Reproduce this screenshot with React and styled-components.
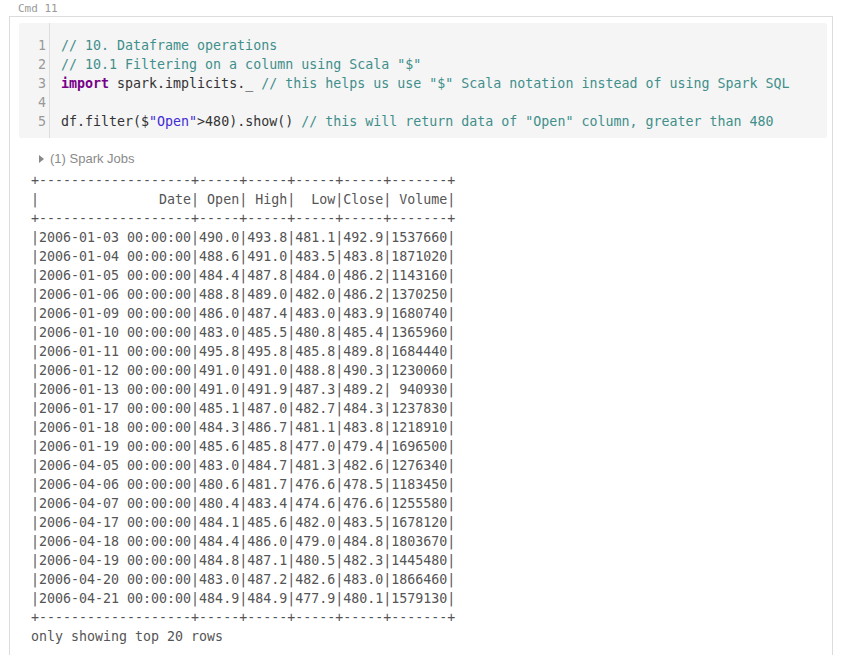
import React from 'react';
import styled, { createGlobalStyle } from 'styled-components';

const GlobalStyle = createGlobalStyle`
  html, body {
    margin: 0;
    padding: 0;
    background: #fff;
  }
  body {
    font-family: 'DejaVu Sans Mono', monospace;
  }
`;

const MONO = `'DejaVu Sans Mono', 'Liberation Mono', monospace`;

const Page = styled.div`
  padding: 2px 0 0 9px;
  width: 824px;
`;

const CmdLabel = styled.div`
  font-family: ${MONO};
  font-size: 11px;
  line-height: 14px;
  color: #9a9a9a;
  padding-left: 9px;
`;

const Cell = styled.div`
  border: 1px solid #dcdcdc;
  border-bottom: none;
  padding: 6px 5px 10px 9px;
  height: 640px;
  box-sizing: border-box;
`;

const CodeBlock = styled.div`
  display: flex;
  background: #f5f5f5;
  border-radius: 2px;
  font-family: ${MONO};
  font-size: 13.3px;
  line-height: 19px;
  color: #333;
`;

const Gutter = styled.div`
  width: 27px;
  padding: 13px 3px 7px 0;
  border-right: 1px solid #dddddd;
  text-align: right;
  color: #999;
`;

const Lines = styled.pre`
  margin: 0;
  padding: 13px 0 7px 11px;
  font: inherit;
  white-space: pre;
`;

const Comment = styled.span`
  color: #3f8f8b;
`;

const Keyword = styled.span`
  color: #770088;
  font-weight: bold;
`;

const Str = styled.span`
  color: #3f2bd6;
`;

const Output = styled.div`
  padding: 11px 0 0 12px;
`;

const Jobs = styled.div`
  display: flex;
  align-items: center;
  gap: 6px;
  padding-left: 8px;
  font-family: 'Liberation Sans', Arial, sans-serif;
  font-size: 13px;
  line-height: 19px;
  color: #8a8a8a;
`;

const Caret = styled.span`
  width: 0;
  height: 0;
  border-top: 4px solid transparent;
  border-bottom: 4px solid transparent;
  border-left: 5px solid #888;
`;

const Table = styled.pre`
  margin: 3px 0 0;
  font-family: ${MONO};
  font-size: 13.3px;
  line-height: 19px;
  color: #555;
`;

const rows = [
  ['2006-01-03', '490.0', '493.8', '481.1', '492.9', '1537660'],
  ['2006-01-04', '488.6', '491.0', '483.5', '483.8', '1871020'],
  ['2006-01-05', '484.4', '487.8', '484.0', '486.2', '1143160'],
  ['2006-01-06', '488.8', '489.0', '482.0', '486.2', '1370250'],
  ['2006-01-09', '486.0', '487.4', '483.0', '483.9', '1680740'],
  ['2006-01-10', '483.0', '485.5', '480.8', '485.4', '1365960'],
  ['2006-01-11', '495.8', '495.8', '485.8', '489.8', '1684440'],
  ['2006-01-12', '491.0', '491.0', '488.8', '490.3', '1230060'],
  ['2006-01-13', '491.0', '491.9', '487.3', '489.2', ' 940930'],
  ['2006-01-17', '485.1', '487.0', '482.7', '484.3', '1237830'],
  ['2006-01-18', '484.3', '486.7', '481.1', '483.8', '1218910'],
  ['2006-01-19', '485.6', '485.8', '477.0', '479.4', '1696500'],
  ['2006-04-05', '483.0', '484.7', '481.3', '482.6', '1276340'],
  ['2006-04-06', '480.6', '481.7', '476.6', '478.5', '1183450'],
  ['2006-04-07', '480.4', '483.4', '474.6', '476.6', '1255580'],
  ['2006-04-17', '484.1', '485.6', '482.0', '483.5', '1678120'],
  ['2006-04-18', '484.4', '486.0', '479.0', '484.8', '1803670'],
  ['2006-04-19', '484.8', '487.1', '480.5', '482.3', '1445480'],
  ['2006-04-20', '483.0', '487.2', '482.6', '483.0', '1866460'],
  ['2006-04-21', '484.9', '484.9', '477.9', '480.1', '1579130'],
];

const sep = '+-------------------+-----+-----+-----+-----+-------+';
const header = '|               Date| Open| High|  Low|Close| Volume|';

const tableText = [
  sep,
  header,
  sep,
  ...rows.map(
    ([d, o, h, l, c, v]) => `|${d} 00:00:00|${o}|${h}|${l}|${c}|${v}|`
  ),
  sep,
  'only showing top 20 rows',
].join('\n');

const App = () => (
  <>
    <GlobalStyle />
    <Page>
      <CmdLabel>Cmd 11</CmdLabel>
      <Cell>
        <CodeBlock>
          <Gutter>
            {[1, 2, 3, 4, 5].map((n) => (
              <div key={n}>{n}</div>
            ))}
          </Gutter>
          <Lines>
            <Comment>// 10. Dataframe operations</Comment>
            {'\n'}
            <Comment>// 10.1 Filtering on a column using Scala "$"</Comment>
            {'\n'}
            <Keyword>import</Keyword> spark.implicits._{' '}
            <Comment>// this helps us use "$" Scala notation instead of using Spark SQL</Comment>
            {'\n\n'}
            df.filter($<Str>"Open"</Str>&gt;480).show(){' '}
            <Comment>// this will return data of "Open" column, greater than 480</Comment>
          </Lines>
        </CodeBlock>
        <Output>
          <Jobs>
            <Caret />
            (1) Spark Jobs
          </Jobs>
          <Table>{tableText}</Table>
        </Output>
      </Cell>
    </Page>
  </>
);

export default App;
